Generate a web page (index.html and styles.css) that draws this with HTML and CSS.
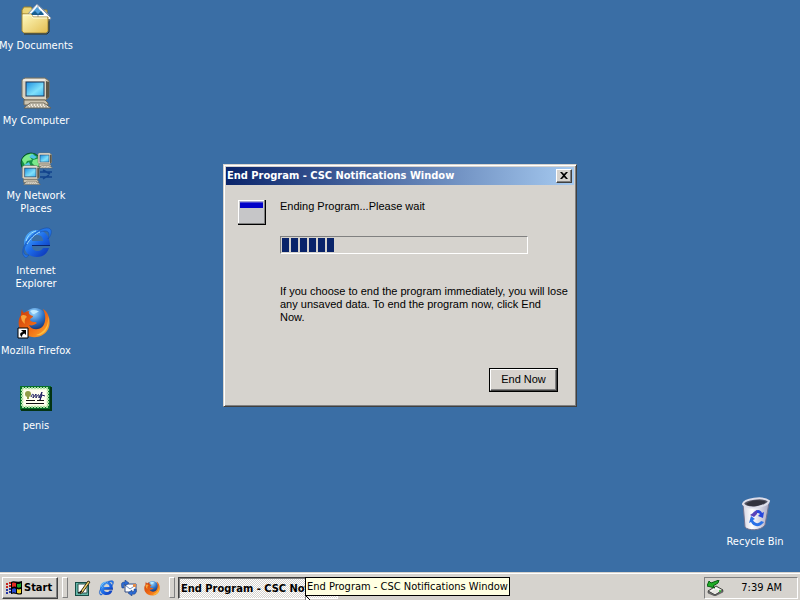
FILE: index.html
```html
<!DOCTYPE html>
<html lang="en">
<head>
<meta charset="utf-8">
<title>Desktop</title>
<link rel="stylesheet" href="styles.css">
</head>
<body>
<svg class="defs" aria-hidden="true">
  <defs>
    <linearGradient id="folder" x1="0" y1="0" x2="1" y2="1"><stop offset="0" stop-color="#fffbc0"/><stop offset="1" stop-color="#e2bd50"/></linearGradient>
    <linearGradient id="screen" x1="0" y1="0" x2="1" y2="1"><stop offset="0" stop-color="#1c8ee0"/><stop offset=".6" stop-color="#7fe0fb"/><stop offset="1" stop-color="#3fb4f0"/></linearGradient>
    <linearGradient id="blue-e" x1="0" y1="0" x2="1" y2="1"><stop offset="0" stop-color="#5cc0ff"/><stop offset=".5" stop-color="#1c6ae8"/><stop offset="1" stop-color="#0a2cae"/></linearGradient>
    <radialGradient id="fox-globe" cx=".45" cy=".2" r=".8"><stop offset="0" stop-color="#9fdcff"/><stop offset=".5" stop-color="#2f74c8"/><stop offset="1" stop-color="#10235f"/></radialGradient>
    <linearGradient id="fox-fur" x1="0" y1="0" x2="1" y2="1"><stop offset="0" stop-color="#c73a0c"/><stop offset=".55" stop-color="#f06a14"/><stop offset="1" stop-color="#ffb030"/></linearGradient>
    <linearGradient id="bin" x1="0" y1="0" x2="1" y2="0"><stop offset="0" stop-color="#d3d3e2"/><stop offset=".35" stop-color="#ffffff"/><stop offset="1" stop-color="#a9a9c4"/></linearGradient>
    <symbol id="pc" viewBox="0 0 32 32">
      <path d="M2 3 5 1H25L29 4V20L26 23H5L2 20Z" fill="#d8d2c2" stroke="#77705f"/>
      <path d="M26 4 29 5V20L26 22Z" fill="#5b5648"/>
      <path d="M3 3H25" stroke="#fff"/>
      <rect x="6" y="5" width="18" height="14" fill="url(#screen)" stroke="#1b3559"/>
      <path d="M4 23H25L28 26V28H4Z" fill="#cbc4b2" stroke="#6e6757"/>
      <path d="M10 26H24L31 31H4Z" fill="#f1ecdf" stroke="#6b6454"/>
      <path d="M9 28H26M7 30H28" stroke="#8a8373" stroke-dasharray="2 1"/>
    </symbol>
    <symbol id="ie" viewBox="0 0 32 32">
      <path fill="url(#blue-e)" fill-rule="evenodd" d="M17 3C25 3 30 9 30 19H12C12 22 14 24 18 24C20 24 22 23 23 21H29C27 27 23 30 17 30C9 30 4 25 4 17C4 9 9 3 17 3ZM12 14H23C23 10 21 8 17 8C14 8 12 10 12 14Z"/>
      <path d="M4 29C0 25 5 14 14 7C21 1 29-1 31 3C32 6 30 10 28 12C30 7 29 4 25 4C19 4 10 11 6 18C2 24 3 29 9 28C7 31 5 31 4 29Z" fill="#2476e8" stroke="#1146aa" stroke-width=".5"/>
      <path d="M7 17C10 12 15 7 20 5M6 14C8 8 12 5 16 4" fill="none" stroke="#a5e2ff" stroke-width="1"/>
      <path d="M12 18.500H30" stroke="#0a2470"/>
    </symbol>
    <symbol id="fox" viewBox="0 0 32 32">
      <circle cx="17" cy="14" r="12" fill="url(#fox-globe)"/>
      <path d="M12 5C15 3 19 4 21 6C18 6 18 8 15 8Z" fill="#c2ecff"/>
      <path d="M4 3C3 6 3 7 3 9C0 13 0 19 2 23C6 31 18 34 26 28C32 24 33 15 30 9C29 6 27 4 25 3C28 9 28 15 25 20C21 25 13 24 11 19C14 20 16 19 19 17C17 15 14 17 12 14C12 12 15 12 15 10C12 9 10 8 11 5C9 5 7 6 6 7C5 6 4 5 4 3Z" fill="url(#fox-fur)"/>
      <path d="M30 10C31 19 27 26 18 29C25 31 33 22 30 10Z" fill="#ffc040"/>
      <path d="M3 10C5 8 8 9 9 11C7 12 6 15 7 18C4 16 3 13 3 10Z" fill="#f9a33a"/>
    </symbol>
  </defs>
</svg>

<main class="desktop">
  <nav class="shortcuts" aria-label="Desktop shortcuts">
    <a class="shortcut" href="#documents">
      <svg class="icon" viewBox="0 0 32 32" aria-hidden="true">
        <path d="M2 12V8L4 5H11L13 8H27V14Z" fill="#e9d477" stroke="#9b812b"/>
        <path d="M7 13 17 2 29 13 23 20Z" fill="#f8fcff" stroke="#8093ad"/>
        <path d="M18 3 31 16 28 20 18 16Z" fill="#fff" stroke="#8796ac"/>
        <path d="M11 12 17 5 24 12Z" fill="#4f9fda"/>
        <path d="M11 12 15 9 18 12 21 9 24 13H12Z" fill="#185d8e"/>
        <path d="M2 12H11L13 15H28L28 29 26 31H4L2 29Z" fill="url(#folder)" stroke="#a58b37"/>
        <path d="M4 32H27L29 30V17" fill="none" stroke="#373018"/>
        <path d="M3 13H11L13 16H27" fill="none" stroke="#fffde0"/>
      </svg>
      <span class="label">My Documents</span>
    </a>
    <a class="shortcut" href="#computer">
      <svg class="icon" aria-hidden="true"><use href="#pc"/></svg>
      <span class="label">My Computer</span>
    </a>
    <a class="shortcut" href="#network">
      <svg class="icon" viewBox="0 0 32 32" aria-hidden="true">
        <circle cx="11" cy="11" r="10" fill="#179346" stroke="#075329"/>
        <path d="M2 8C4 3 10 1 14 2L10 5 12 8 7 9 5 13ZM13 8 20 6V13L16 15 12 11Z" fill="#7cea8b"/>
        <path d="M12 2 17 5 14 7 9 5ZM4 13 9 10 11 15 7 18Z" fill="#4fc5e4"/>
        <path d="M20 20H32M20 25H32M23 18 30 22M29 23 23 27" stroke="#12438c" stroke-width="1.5"/>
        <use href="#pc" x="17" y="0" width="16" height="17"/>
        <use href="#pc" x="1" y="13" width="20" height="20"/>
      </svg>
      <span class="label">My Network Places</span>
    </a>
    <a class="shortcut" href="#internet">
      <svg class="icon" aria-hidden="true"><use href="#ie"/></svg>
      <span class="label">Internet Explorer</span>
    </a>
    <a class="shortcut" href="#firefox">
      <svg class="icon" viewBox="0 0 32 32" aria-hidden="true">
        <use href="#fox" x="-2" y="-1" width="32" height="32"/>
        <path d="M-2 21H8V31H-2Z" fill="#fff" stroke="#000"/>
        <path d="M1 23H6V28L4.500 26.500C2.500 27 2 28 2 30C-1 28 0 25 3 25Z" fill="#000"/>
      </svg>
      <span class="label">Mozilla Firefox</span>
    </a>
    <a class="shortcut" href="#certificate">
      <svg class="icon" viewBox="0 3 32 32" aria-hidden="true">
        <rect x="0" y="7" width="31" height="24" fill="#087027"/>
        <path d="M1 31H31V8" fill="none" stroke="#043413" stroke-width="2"/>
        <rect x="2" y="9" width="26" height="19" fill="#eff9d9" stroke="#a9dfa2" stroke-width="2" stroke-dasharray="2 1"/>
        <rect x="4" y="11" width="22" height="15" fill="#fffff0"/>
        <circle cx="8" cy="15" r="3" fill="#909c49"/>
        <path d="M8 16V20" stroke="#909c49" stroke-width="2"/>
        <path d="M11 18C13 13 14 15 13 19L16 15V19C17 17 18 15 19 16V19L22 13 20 21 22 16 25 17" fill="none" stroke="#17175c"/>
        <path d="M6 21.500H15M6 24.500H24M17 21.500H24" stroke="#111"/>
      </svg>
      <span class="label">penis</span>
    </a>
  </nav>

  <section class="dialog" role="dialog" aria-labelledby="dialog-title">
    <header class="titlebar">
      <h1 class="title" id="dialog-title">End Program - CSC Notifications Window</h1>
      <button class="close" type="button" aria-label="Close">
        <svg class="cross" viewBox="0 0 8 7" aria-hidden="true"><path d="M0 0H2L4 2 6 0H8L5 3.500 8 7H6L4 5 2 7H0L3 3.500Z"/></svg>
      </button>
    </header>
    <div class="content">
      <svg class="program-icon" viewBox="0 0 28 25" aria-hidden="true">
        <path d="M0 0H28V25H0Z" fill="#000"/>
        <path d="M0 0H27V24H0Z" fill="#808080"/>
        <path d="M0 0H26V23H0Z" fill="#fff"/>
        <path d="M1 1H26V23H1Z" fill="#c6c6c8"/>
        <path d="M2 2H25V8H2Z" fill="#0000c8"/>
        <path d="M2 2H25" stroke="#8585df"/>
      </svg>
      <div class="details">
        <p class="message" id="status">Ending Program...Please wait</p>
        <div class="progress" role="progressbar" aria-labelledby="status">
          <i class="block"></i><i class="block"></i><i class="block"></i><i class="block"></i><i class="block"></i><i class="block"></i>
        </div>
        <p class="message">If you choose to end the program immediately, you will lose any unsaved data. To end the program now, click End<br>Now.</p>
      </div>
    </div>
    <footer class="actions"><button class="end-now" type="button">End Now</button></footer>
  </section>

  <a class="shortcut recycle" href="#recycle">
    <svg class="icon" viewBox="0 0 32 32" aria-hidden="true">
      <path d="M4 5 6 29C9 33 22 33 26 27L30 5Z" fill="url(#bin)" stroke="#74748f"/>
      <path d="M4 6C5 1 24-2 30 3C29 8 10 13 4 6Z" fill="#565665" stroke="#dedeea" stroke-width="2"/>
      <path d="M7 6C11 2 22 1 27 4C22 8 12 10 7 6Z" fill="#33333e"/>
      <path d="M14 15C18 10 22 12 23 15L25 14 24 20 19 18 21 16C19 14 17 15 16 17Z" fill="#2747dc"/>
      <path d="M12 18 16 21 14 22C16 26 20 26 22 23L25 24C21 30 14 29 12 24L10 25Z" fill="#2b72e7"/>
      <path d="M14 15 18 12 18 16 15 19 11 17Z" fill="#5a43b9"/>
    </svg>
    <span class="label">Recycle Bin</span>
  </a>
</main>

<footer class="taskbar">
  <button class="start" type="button">
    <svg class="flag" viewBox="0 0 17 16" aria-hidden="true">
      <path d="M5 2C8 0 11 3 16 1V14C12 16 9 12 5 14Z" fill="#000"/>
      <path d="M6 3C8 2 9 3 10 3V7C8 6 7 7 6 7Z" fill="#e52b20"/>
      <path d="M11 4C13 4 14 4 15 3V7C13 8 12 8 11 7Z" fill="#20a52c"/>
      <path d="M6 9C8 8 9 8 10 9V13C8 12 7 12 6 13Z" fill="#244bd7"/>
      <path d="M11 9C13 10 14 9 15 9V13C13 14 12 13 11 13Z" fill="#efd22c"/>
      <path d="M0 4H2M3 3H5M0 7H2M3 6H5" stroke="#c42420" stroke-width="2"/>
      <path d="M0 10H2M3 9H5M0 13H2M3 12H5" stroke="#2636a4" stroke-width="2"/>
    </svg>
    Start
  </button>
  <nav class="quick-launch" aria-label="Quick launch">
    <button class="launch" type="button" aria-label="Show Desktop">
      <svg class="small-icon" viewBox="0 0 16 16" aria-hidden="true">
        <path d="M0 2H14V16H0Z" fill="#174c45"/><path d="M1 3H13V15H1Z" fill="#64b6a8"/>
        <path d="M3 4H12V13H3Z" fill="#fff" stroke="#2b504b"/><path d="M6 11 13 1 15 2 8 12 5 14Z" fill="#eed069" stroke="#3b321b"/><path d="M3 13 7 11" stroke="#000"/>
      </svg>
    </button>
    <button class="launch" type="button" aria-label="Internet Explorer"><svg class="small-icon" aria-hidden="true"><use href="#ie"/></svg></button>
    <button class="launch" type="button" aria-label="Outlook Express">
      <svg class="small-icon" viewBox="0 0 16 16" aria-hidden="true">
        <path d="M4 4H15V12H4Z" fill="#fff" stroke="#344c83"/><path d="M4 5 9 9 15 5" fill="none" stroke="#7790be"/><path d="M12 4H15V7H12Z" fill="#e28a48"/>
        <path d="M1 8C0 4 0 2 4 2V0L8 3 4 6V4C2 4 3 6 3 8ZM15 9C16 13 14 15 11 14V16L7 13 11 10V12C13 12 13 11 13 9Z" fill="#2c6bd4" stroke="#173978" stroke-width=".5"/>
      </svg>
    </button>
    <button class="launch" type="button" aria-label="Mozilla Firefox"><svg class="small-icon" aria-hidden="true"><use href="#fox"/></svg></button>
  </nav>
  <div class="tasks">
    <button class="task" type="button">End Program - CSC Notifications Window</button>
    <div class="tooltip" role="tooltip">End Program - CSC Notifications Window</div>
    <svg class="pointer" viewBox="0 0 7 6" aria-hidden="true"><path d="M0 0 6 6H0Z" fill="#fff"/><path d="M0 0V6M0 0 6 6" stroke="#000"/></svg>
  </div>
  <div class="tray">
    <svg class="tray-icon" viewBox="0 0 17 16" aria-hidden="true">
      <path d="M1 11 9 6 16 10 8 15Z" fill="#e7e7e2" stroke="#42433d"/><path d="M8 15 16 10V12L8 16 1 13V11Z" fill="#777" stroke="#333" stroke-width=".5"/>
      <path d="M4 11 9 8 12 10" fill="none" stroke="#fff"/>
      <path d="M0 6 2 1 4 3 12 0 11 3 6 6 8 8Z" fill="#20ad27" stroke="#075c10"/>
      <circle cx="13" cy="11" r="1" fill="#29c22c"/>
    </svg>
    <time class="clock" datetime="07:39">7:39 AM</time>
  </div>
</footer>
</body>
</html>
```
FILE: styles.css
```css
:root {
  --face: #d6d3ce;
  --shadow: #808080;
  --dark: #404040;
  --ui: Tahoma, "DejaVu Sans Condensed", "Liberation Sans", sans-serif;
  --dialog: "Liberation Sans", Arial, sans-serif;
}

* { box-sizing: border-box; }

body {
  display: flex;
  flex-direction: column;
  min-height: 100vh;
  margin: 0;
  overflow: hidden;
  background: #3a6ea5;
  color: #000;
  font: 11px/13px var(--ui);
}

button { padding: 0; border: 0; background: none; color: inherit; font: inherit; }
svg { display: block; flex: none; }
.defs { position: absolute; width: 0; height: 0; }

.desktop { display: grid; flex: 1; }
.desktop > * { grid-area: 1 / 1; }

.shortcuts {
  display: grid;
  grid-template-rows: repeat(3, 75px) 80px;
  grid-auto-rows: 75px;
  place-self: start;
}

.shortcut {
  display: flex;
  flex-direction: column;
  align-items: center;
  gap: 5px;
  width: 72px;
  padding-top: 2px;
  color: #fff;
  text-align: center;
  text-decoration: none;
}

.icon { width: 32px; height: 32px; overflow: visible; }
.label { margin: 0 -1px; }
.recycle { place-self: end; margin: 0 9px 24px 0; }

.dialog {
  place-self: center;
  width: 354px;
  max-width: 100%;
  margin-bottom: 2px;
  padding: 2px;
  border: 1px solid;
  border-color: var(--face) var(--dark) var(--dark) var(--face);
  background: var(--face);
  box-shadow: inset 1px 1px #fff, inset -1px -1px var(--shadow);
}

.titlebar {
  display: flex;
  align-items: center;
  justify-content: space-between;
  height: 18px;
  padding: 0 2px 0 1px;
  background: linear-gradient(to right, #0a246a, #a6caf0);
}

.title { margin: 0; color: #fff; font: bold 11px/16px var(--ui); white-space: nowrap; }

.close, .start, .end-now {
  border: 1px solid;
  border-color: #fff var(--dark) var(--dark) #fff;
  background: var(--face);
  box-shadow: inset -1px -1px var(--shadow);
}

.close { display: grid; place-items: center; width: 16px; height: 14px; }
.cross { width: 8px; height: 7px; }

.content {
  display: flex;
  align-items: flex-start;
  gap: 14px;
  padding: 15px 4px 0 12px;
  font: 11px/13px var(--dialog);
}

.program-icon { width: 28px; height: 25px; }
.details { flex: 1; }
.message { margin: 0; }

.progress {
  display: flex;
  gap: 2px;
  width: 248px;
  height: 18px;
  margin: 23px 0 31px;
  padding: 1px;
  border: 1px solid;
  border-color: var(--shadow) #fff #fff var(--shadow);
}

.block { width: 7px; background: #0a246a; }

.actions { display: flex; justify-content: flex-end; padding: 44px 16px 12px 0; }
.end-now {
  width: 69px;
  height: 24px;
  outline: 1px solid #000;
  outline-offset: -1px;
  border-width: 2px;
  font: 11px/13px var(--dialog);
}

.taskbar {
  display: flex;
  align-items: center;
  height: 28px;
  padding: 4px 2px 2px;
  border-top: 1px solid var(--face);
  background: var(--face);
  box-shadow: inset 0 1px #fff;
}

.start {
  display: flex;
  align-items: center;
  gap: 1px;
  width: 56px;
  height: 22px;
  padding-left: 3px;
  font-weight: bold;
}

.flag { width: 17px; height: 16px; }

.quick-launch {
  display: flex;
  gap: 7px;
  margin-left: 4px;
}

.quick-launch, .tasks { align-items: center; height: 22px; }

.quick-launch::before, .tasks::before {
  content: "";
  width: 4px;
  height: 19px;
  border: 1px solid;
  border-color: #fff var(--shadow) var(--shadow) #fff;
}

.small-icon { width: 16px; height: 16px; }

.tasks {
  position: relative;
  display: flex;
  flex: 1;
  gap: 3px;
  min-width: 0;
  margin-left: 9px;
}

.task {
  width: 160px;
  height: 22px;
  padding: 1px 2px 0;
  overflow: hidden;
  border: 1px solid;
  border-color: var(--dark) #fff #fff var(--dark);
  background: repeating-conic-gradient(#fff 0 25%, #d6d3ce 0 50%) 0 0 / 2px 2px;
  box-shadow: inset 1px 1px var(--shadow);
  font-weight: bold;
  text-align: left;
  white-space: nowrap;
}

.tooltip {
  position: absolute;
  top: 0;
  left: 136px;
  padding: 2px 1px;
  border: 1px solid #000;
  background: #ffffe1;
  white-space: nowrap;
}

.pointer { position: absolute; top: 18px; left: 136px; width: 7px; height: 6px; }

.tray {
  display: flex;
  align-items: center;
  justify-content: space-between;
  width: 94px;
  height: 22px;
  padding: 0 15px 0 2px;
  border: 1px solid;
  border-color: var(--shadow) #fff #fff var(--shadow);
}

.tray-icon { width: 17px; height: 16px; }
```
